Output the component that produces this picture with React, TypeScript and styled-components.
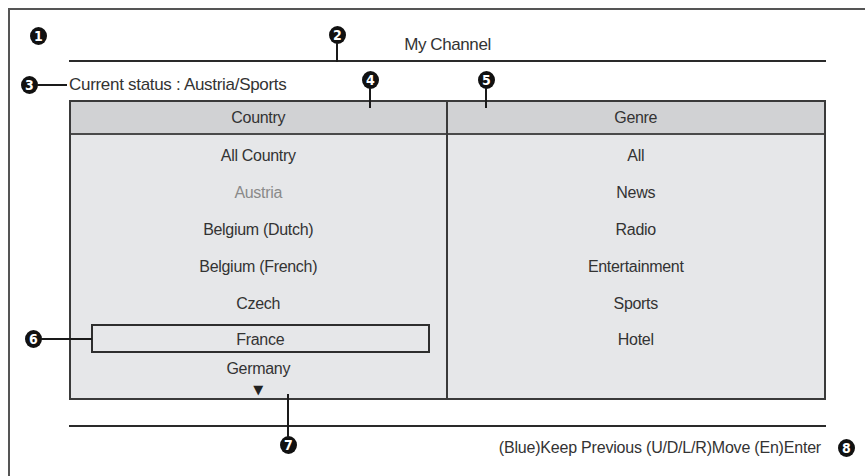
import React from 'react';
import styled, { createGlobalStyle } from 'styled-components';

const GlobalStyle = createGlobalStyle`
  html, body {
    margin: 0;
    padding: 0;
    background: #ffffff;
    overflow: hidden;
  }
  body {
    font-family: 'Liberation Sans', Arial, sans-serif;
    color: #333333;
  }
`;

const Page = styled.div`
  width: 865px;
  height: 476px;
  padding: 8px 0 0 8px;
  box-sizing: border-box;
  overflow: hidden;
`;

const Frame = styled.div`
  position: relative;
  width: 870px;
  height: 468px;
  border-top: 2px solid #555555;
  border-left: 2px solid #555555;
  box-sizing: border-box;
`;

const Screen = styled.div`
  margin-left: 59px;
  width: 757px;
  display: flex;
  flex-direction: column;
`;

const Title = styled.div`
  height: 52px;
  border-bottom: 2px solid #2a2a2a;
  display: flex;
  align-items: flex-end;
  justify-content: center;
  padding-bottom: 5px;
  box-sizing: border-box;
  font-size: 17px;
  letter-spacing: -0.4px;
  color: #333333;
`;

const Status = styled.div`
  height: 38px;
  display: flex;
  align-items: flex-end;
  padding-bottom: 5px;
  box-sizing: border-box;
  font-size: 17px;
  letter-spacing: -0.3px;
  color: #333333;
`;

const Table = styled.div`
  display: grid;
  grid-template-columns: 1fr 1fr;
  height: 300px;
  border: 2px solid #3a3a3a;
  box-sizing: border-box;
  background: #e6e7e9;
`;

const Column = styled.div<{ divider?: boolean }>`
  display: flex;
  flex-direction: column;
  border-right: ${p => (p.divider ? '2px solid #3a3a3a' : 'none')};
`;

const HeadCell = styled.div`
  height: 31px;
  background: #d1d2d4;
  border-bottom: 2px solid #4a4a4a;
  display: flex;
  align-items: center;
  justify-content: center;
  font-size: 16px;
  letter-spacing: -0.3px;
  color: #333333;
`;

const List = styled.div`
  display: flex;
  flex-direction: column;
  padding-top: 2px;
`;

const Item = styled.div<{ dim?: boolean; h?: number }>`
  height: ${p => p.h ?? 37}px;
  display: flex;
  align-items: center;
  justify-content: center;
  font-size: 16px;
  letter-spacing: -0.3px;
  color: ${p => (p.dim ? '#8a8a8a' : '#333333')};
`;

const Selected = styled.div`
  margin: 2px 16px 0 20px;
  height: 29px;
  border: 2px solid #2e2e2e;
  box-sizing: border-box;
  display: flex;
  align-items: center;
  justify-content: center;
  padding-top: 3px;
  font-size: 16px;
  letter-spacing: -0.3px;
  color: #333333;
`;

const More = styled.div`
  height: 12px;
  display: flex;
  justify-content: center;
  font-family: 'DejaVu Sans', sans-serif;
  font-size: 13px;
  line-height: 12px;
  color: #222222;
`;

const Rule = styled.div`
  margin-top: 25px;
  border-top: 2px solid #2a2a2a;
`;

const Help = styled.div`
  display: flex;
  justify-content: flex-end;
  padding: 12px 5px 0 0;
  font-size: 16px;
  letter-spacing: -0.2px;
  color: #333333;
`;

const Callout = styled.div<{ x: number; y: number }>`
  position: absolute;
  left: ${p => p.x - 8}px;
  top: ${p => p.y - 9}px;
  width: 17px;
  height: 18px;
  border-radius: 50%;
  background: #111111;
  color: #ffffff;
  display: flex;
  align-items: center;
  justify-content: center;
  font-family: 'DejaVu Sans Condensed', 'DejaVu Sans', sans-serif;
  font-stretch: condensed;
  font-weight: bold;
  font-size: 14px;
  line-height: 1;
`;

const Leader = styled.div<{ x: number; y: number; w?: number; h?: number }>`
  position: absolute;
  left: ${p => p.x}px;
  top: ${p => p.y}px;
  width: ${p => p.w ?? 2}px;
  height: ${p => p.h ?? 2}px;
  background: #1a1a1a;
`;

const countries: { name: string; dim?: boolean }[] = [
  { name: 'All Country' },
  { name: 'Austria', dim: true },
  { name: 'Belgium (Dutch)' },
  { name: 'Belgium (French)' },
  { name: 'Czech' },
];

const genres = ['All', 'News', 'Radio', 'Entertainment', 'Sports'];

// frame origin sits at page (10,10) inside the border
const at = (x: number, y: number) => ({ x: x - 10, y: y - 10 });

const App: React.FC = () => {
  return (
    <Page>
      <GlobalStyle />
      <Frame>
        <Screen>
          <Title>My Channel</Title>
          <Status>Current status : Austria/Sports</Status>
          <Table>
            <Column divider>
              <HeadCell>Country</HeadCell>
              <List>
                {countries.map(c => (
                  <Item key={c.name} dim={c.dim}>
                    {c.name}
                  </Item>
                ))}
                <Selected>France</Selected>
                <Item h={31}>Germany</Item>
                <More>▼</More>
              </List>
            </Column>
            <Column>
              <HeadCell>Genre</HeadCell>
              <List>
                {genres.map(g => (
                  <Item key={g}>{g}</Item>
                ))}
                <Item h={36}>Hotel</Item>
              </List>
            </Column>
          </Table>
          <Rule />
          <Help>(Blue)Keep Previous (U/D/L/R)Move (En)Enter</Help>
        </Screen>

        <Callout {...at(38, 36)}>1</Callout>

        <Callout {...at(337, 35)}>2</Callout>
        <Leader {...at(336, 43)} h={19} />

        <Callout {...at(29, 85)}>3</Callout>
        <Leader {...at(37, 84)} w={30} />

        <Callout {...at(370, 80)}>4</Callout>
        <Leader {...at(369, 88)} h={20} />

        <Callout {...at(486, 80)}>5</Callout>
        <Leader {...at(485, 88)} h={20} />

        <Callout {...at(33, 339)}>6</Callout>
        <Leader {...at(41, 338)} w={51} />

        <Callout {...at(288, 445)}>7</Callout>
        <Leader {...at(287, 394)} h={44} />

        <Callout {...at(846, 448)}>8</Callout>
      </Frame>
    </Page>
  );
};

export default App;
